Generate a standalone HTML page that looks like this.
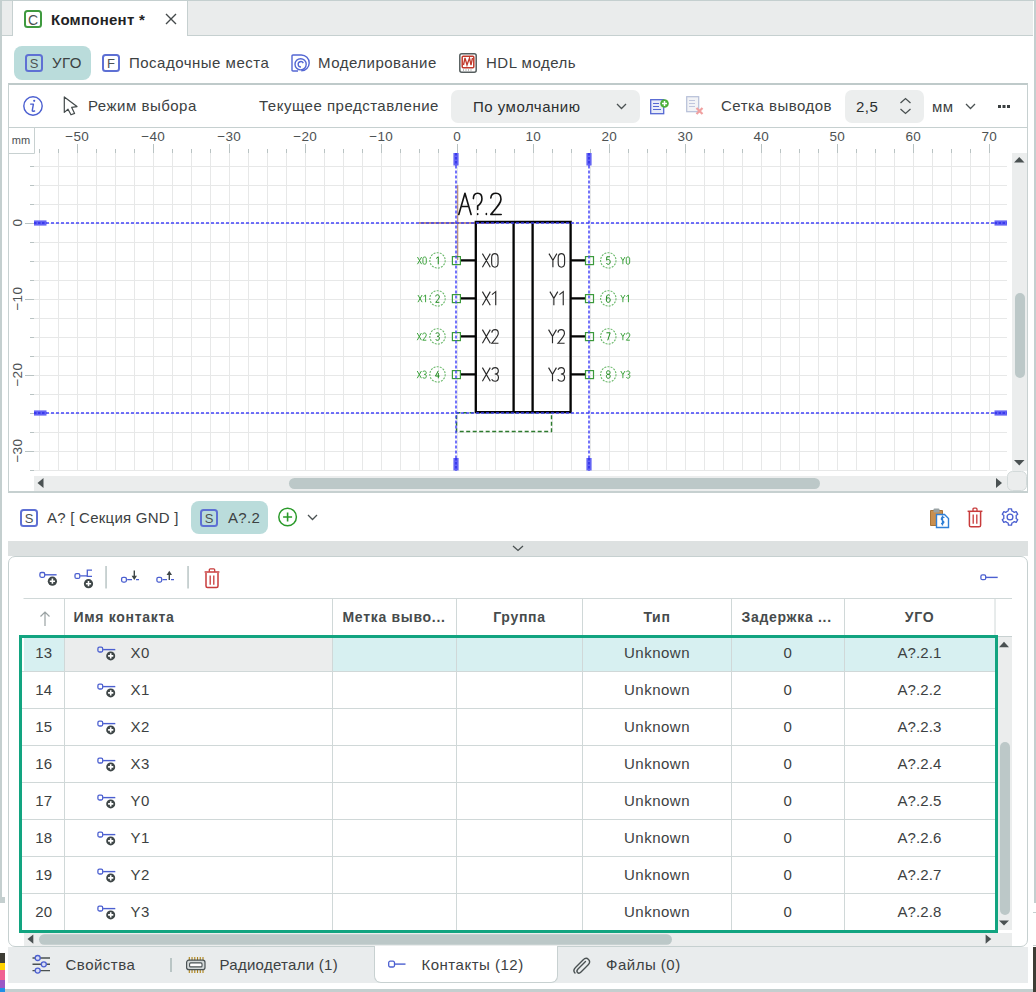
<!DOCTYPE html>
<html><head><meta charset="utf-8">
<style>
*{box-sizing:border-box;margin:0;padding:0}
html,body{width:1036px;height:992px;overflow:hidden;background:#fff;position:relative;font-family:"Liberation Sans",sans-serif;color:#3a3f40}
.a{position:absolute}
.t{position:absolute;font-size:15px;line-height:17px;white-space:nowrap;letter-spacing:0.5px;color:#3c4142}
.ic{position:absolute;border:2px solid #5e70d4;border-radius:3.5px;font-size:13px;line-height:14px;padding-top:0.5px;text-align:center;color:#4d5253;letter-spacing:0}
svg{position:absolute;overflow:visible}
</style></head><body>

<!-- page edges -->
<div class="a" style="left:0;top:0;width:1036px;height:1px;background:#c4cfcf"></div>
<div class="a" style="left:0;top:0;width:2px;height:903px;background:#c4cfcf"></div>
<div class="a" style="left:0;top:897px;width:5px;height:6px;background:#c4cfcf"></div>
<div class="a" style="left:1034px;top:0;width:2px;height:903px;background:#c4cfcf"></div>

<!-- top tab bar -->
<div class="a" style="left:2px;top:1px;width:1031px;height:35px;background:#eaecec;border-bottom:1px solid #c6d0d0"></div>
<div class="a" style="left:12px;top:1px;width:176px;height:35px;background:#fff;border-left:1px solid #c6d0d0;border-right:1px solid #c6d0d0"></div>
<div class="ic" style="left:24px;top:10px;width:18px;height:18px;border-color:#3f9a3f;font-size:14px;line-height:14px">C</div>
<div class="t" style="left:51px;top:11px;font-weight:bold;color:#1f2324;letter-spacing:0.25px">Компонент *</div>
<svg style="left:165px;top:13px" width="12" height="12"><path d="M1 1L11 11M11 1L1 11" stroke="#444a4b" stroke-width="1.4"/></svg>

<!-- sub tabs -->
<div class="a" style="left:14px;top:45.6px;width:76.6px;height:34.2px;background:#badcdb;border-radius:8px"></div>
<div class="ic" style="left:25px;top:54px;width:18px;height:18px">S</div>
<div class="t" style="left:52px;top:54px">УГО</div>
<div class="ic" style="left:102px;top:54px;width:18px;height:18px">F</div>
<div class="t" style="left:129px;top:54px">Посадочные места</div>
<svg style="left:291px;top:54px" width="19" height="18"><path d="M7 17H2Q1 17 1 16V2Q1 1 2 1H10.3A7.9 7.9 0 0 1 10.3 16.8" fill="none" stroke="#5467d3" stroke-width="1.4"/><circle cx="9.6" cy="10.3" r="5.6" fill="none" stroke="#5467d3" stroke-width="1.4"/><path d="M12.3 9.1A2.7 2.7 0 1 0 10 13" fill="none" stroke="#5467d3" stroke-width="1.4"/></svg>
<div class="t" style="left:318px;top:54px">Моделирование</div>
<svg style="left:459px;top:53px" width="18" height="20"><rect x="0.8" y="0.8" width="16.4" height="18.4" rx="2" fill="#fff" stroke="#555d5e" stroke-width="1.5"/><rect x="3.2" y="3.2" width="11.6" height="11.6" rx="1" fill="#fff" stroke="#c0392b" stroke-width="1.5"/><path d="M4.5 12L6 5L8 12L10.5 5L12 12L13.5 5" fill="none" stroke="#c0392b" stroke-width="1.3"/><path d="M4 17H14" stroke="#555" stroke-width="0.8" stroke-dasharray="1 1.5"/></svg>
<div class="t" style="left:486px;top:54px">HDL модель</div>

<!-- toolbar -->
<div class="a" style="left:8px;top:83px;width:1019.5px;height:45px;border:1px solid #c6d0d0;border-top:2px solid #bfcaca;border-bottom:none"></div>


<svg style="left:23px;top:96px" width="20" height="20"><circle cx="10" cy="10" r="9.2" fill="none" stroke="#4b5fd0" stroke-width="1.4"/><path d="M7.6 8.1H10.4L9.3 14.3Q9.1 15.3 10.1 15.2L11.6 15" fill="none" stroke="#4b5fd0" stroke-width="1.4" stroke-linecap="round" stroke-linejoin="round"/><circle cx="11.2" cy="4.8" r="1.1" fill="#4b5fd0"/></svg>
<svg style="left:63px;top:96px" width="16" height="21"><path d="M1.3 0.9V16.4L5 13.2L8 18.8L11.6 17.4L8.7 11.4L14 10.6Z" fill="#fff" stroke="#434a4b" stroke-width="1.2" stroke-linejoin="round"/></svg>
<div class="t" style="left:88px;top:97px">Режим выбора</div>
<div class="t" style="left:259px;top:97px">Текущее представление</div>
<div class="a" style="left:451px;top:90px;width:189px;height:32.5px;background:#eceeee;border-radius:7px"></div>
<div class="t" style="left:473px;top:98px;color:#2b2f30">По умолчанию</div>
<svg style="left:616px;top:103px" width="11" height="7"><path d="M1 1L5.5 5.5L10 1" fill="none" stroke="#4a5152" stroke-width="1.3"/></svg>
<svg style="left:650px;top:97px" width="20" height="18"><rect x="0.7" y="2.7" width="13" height="14" fill="#e8ecf8" stroke="#5467d3" stroke-width="1.3"/><path d="M3 6.5H9M3 9.5H9M3 12.5H11" stroke="#5467d3" stroke-width="1.2"/><circle cx="14.5" cy="6.5" r="4.3" fill="#4caf3a"/><path d="M14.5 4V9M12 6.5H17" stroke="#fff" stroke-width="1.5"/></svg>
<svg style="left:686px;top:96px" width="18" height="19"><rect x="0.7" y="0.7" width="12" height="15" fill="#f2f3f6" stroke="#b6bfd8" stroke-width="1.2"/><path d="M3 4.5H9M3 7.5H9M3 10.5H9" stroke="#c0c6de" stroke-width="1.1"/><path d="M10.5 12L16.5 18M16.5 12L10.5 18" stroke="#f0a0a0" stroke-width="2.2"/></svg>
<div class="t" style="left:721px;top:97px">Сетка выводов</div>
<div class="a" style="left:845px;top:90px;width:79px;height:32.5px;background:#eceeee;border-radius:7px"></div>
<div class="t" style="left:856px;top:98px;color:#2b2f30">2,5</div>
<svg style="left:899px;top:97px" width="13" height="18"><path d="M1.5 6L6.5 1.5L11.5 6M1.5 12L6.5 16.5L11.5 12" fill="none" stroke="#4a5152" stroke-width="1.3"/></svg>
<div class="t" style="left:932px;top:98px">мм</div>
<svg style="left:965px;top:103px" width="11" height="7"><path d="M1 1L5.5 5.5L10 1" fill="none" stroke="#4a5152" stroke-width="1.3"/></svg>
<svg style="left:998px;top:105px" width="13" height="4"><rect x="0" y="0" width="3" height="3" fill="#3a3f40"/><rect x="4.5" y="0" width="3" height="3" fill="#3a3f40"/><rect x="9" y="0" width="3" height="3" fill="#3a3f40"/></svg>
<!--CANVAS--><svg style="left:0;top:0" width="1036" height="992" viewBox="0 0 1036 992"><rect x="8" y="127" width="1" height="366" fill="#c8d1d1"/><rect x="1027" y="127" width="1" height="366" fill="#c8d1d1"/><rect x="8" y="491" width="1020" height="2" fill="#c6d0d0"/><rect x="8" y="127" width="1020" height="1" fill="#c6d0d0"/><path d="M39.5,153V470.5 M58.5,153V470.5 M77.5,153V470.5 M96.5,153V470.5 M115.5,153V470.5 M134.5,153V470.5 M153.5,153V470.5 M172.5,153V470.5 M191.5,153V470.5 M210.5,153V470.5 M229.5,153V470.5 M248.5,153V470.5 M267.5,153V470.5 M286.5,153V470.5 M305.5,153V470.5 M324.5,153V470.5 M343.5,153V470.5 M362.5,153V470.5 M381.5,153V470.5 M400.5,153V470.5 M419.5,153V470.5 M438.5,153V470.5 M457.5,153V470.5 M476.5,153V470.5 M495.5,153V470.5 M514.5,153V470.5 M533.5,153V470.5 M552.5,153V470.5 M571.5,153V470.5 M590.5,153V470.5 M609.5,153V470.5 M628.5,153V470.5 M647.5,153V470.5 M666.5,153V470.5 M685.5,153V470.5 M704.5,153V470.5 M723.5,153V470.5 M742.5,153V470.5 M761.5,153V470.5 M780.5,153V470.5 M799.5,153V470.5 M818.5,153V470.5 M837.5,153V470.5 M856.5,153V470.5 M875.5,153V470.5 M894.5,153V470.5 M913.5,153V470.5 M932.5,153V470.5 M951.5,153V470.5 M970.5,153V470.5 M989.5,153V470.5 M34,166.5H1007 M34,185.5H1007 M34,204.5H1007 M34,223.5H1007 M34,242.5H1007 M34,261.5H1007 M34,280.5H1007 M34,299.5H1007 M34,318.5H1007 M34,337.5H1007 M34,356.5H1007 M34,375.5H1007 M34,394.5H1007 M34,413.5H1007 M34,432.5H1007 M34,451.5H1007 M34,470.5H1007" stroke="#e7e8e8" stroke-width="1" fill="none"/><path d="M39.5,149V153 M58.5,149V153 M77.5,144V153 M96.5,149V153 M115.5,149V153 M134.5,149V153 M153.5,144V153 M172.5,149V153 M191.5,149V153 M210.5,149V153 M229.5,144V153 M248.5,149V153 M267.5,149V153 M286.5,149V153 M305.5,144V153 M324.5,149V153 M343.5,149V153 M362.5,149V153 M381.5,144V153 M400.5,149V153 M419.5,149V153 M438.5,149V153 M457.5,144V153 M476.5,149V153 M495.5,149V153 M514.5,149V153 M533.5,144V153 M552.5,149V153 M571.5,149V153 M590.5,149V153 M609.5,144V153 M628.5,149V153 M647.5,149V153 M666.5,149V153 M685.5,144V153 M704.5,149V153 M723.5,149V153 M742.5,149V153 M761.5,144V153 M780.5,149V153 M799.5,149V153 M818.5,149V153 M837.5,144V153 M856.5,149V153 M875.5,149V153 M894.5,149V153 M913.5,144V153 M932.5,149V153 M951.5,149V153 M970.5,149V153 M989.5,144V153 M30,166.5H34 M30,185.5H34 M30,204.5H34 M25,223.5H34 M30,242.5H34 M30,261.5H34 M30,280.5H34 M25,299.5H34 M30,318.5H34 M30,337.5H34 M30,356.5H34 M25,375.5H34 M30,394.5H34 M30,413.5H34 M30,432.5H34 M25,451.5H34 M30,470.5H34" stroke="#b9c3c3" stroke-width="1" fill="none"/><path d="M34.5,127V153.5H9" stroke="#c8d1d1" stroke-width="1" fill="none"/><text x="21" y="143.5" font-size="11" text-anchor="middle" fill="#4a4f50" font-family="Liberation Sans" letter-spacing="0.2">mm</text><text x="77.2" y="141" font-size="13.5" text-anchor="middle" fill="#4d5253" font-family="Liberation Sans" letter-spacing="0.3">−50</text><text x="153.2" y="141" font-size="13.5" text-anchor="middle" fill="#4d5253" font-family="Liberation Sans" letter-spacing="0.3">−40</text><text x="229.2" y="141" font-size="13.5" text-anchor="middle" fill="#4d5253" font-family="Liberation Sans" letter-spacing="0.3">−30</text><text x="305.2" y="141" font-size="13.5" text-anchor="middle" fill="#4d5253" font-family="Liberation Sans" letter-spacing="0.3">−20</text><text x="381.2" y="141" font-size="13.5" text-anchor="middle" fill="#4d5253" font-family="Liberation Sans" letter-spacing="0.3">−10</text><text x="457.2" y="141" font-size="13.5" text-anchor="middle" fill="#4d5253" font-family="Liberation Sans" letter-spacing="0.3">0</text><text x="533.2" y="141" font-size="13.5" text-anchor="middle" fill="#4d5253" font-family="Liberation Sans" letter-spacing="0.3">10</text><text x="609.2" y="141" font-size="13.5" text-anchor="middle" fill="#4d5253" font-family="Liberation Sans" letter-spacing="0.3">20</text><text x="685.2" y="141" font-size="13.5" text-anchor="middle" fill="#4d5253" font-family="Liberation Sans" letter-spacing="0.3">30</text><text x="761.2" y="141" font-size="13.5" text-anchor="middle" fill="#4d5253" font-family="Liberation Sans" letter-spacing="0.3">40</text><text x="837.2" y="141" font-size="13.5" text-anchor="middle" fill="#4d5253" font-family="Liberation Sans" letter-spacing="0.3">50</text><text x="913.2" y="141" font-size="13.5" text-anchor="middle" fill="#4d5253" font-family="Liberation Sans" letter-spacing="0.3">60</text><text x="989.2" y="141" font-size="13.5" text-anchor="middle" fill="#4d5253" font-family="Liberation Sans" letter-spacing="0.3">70</text><text x="0" y="0" transform="translate(22,222.7) rotate(-90)" font-size="13.5" text-anchor="middle" fill="#4d5253" font-family="Liberation Sans" letter-spacing="0.3">0</text><text x="0" y="0" transform="translate(22,298.7) rotate(-90)" font-size="13.5" text-anchor="middle" fill="#4d5253" font-family="Liberation Sans" letter-spacing="0.3">−10</text><text x="0" y="0" transform="translate(22,374.7) rotate(-90)" font-size="13.5" text-anchor="middle" fill="#4d5253" font-family="Liberation Sans" letter-spacing="0.3">−20</text><text x="0" y="0" transform="translate(22,450.7) rotate(-90)" font-size="13.5" text-anchor="middle" fill="#4d5253" font-family="Liberation Sans" letter-spacing="0.3">−30</text><rect x="1012" y="153" width="15" height="318" fill="#ebeded"/><path d="M1014,162.5H1024.5L1019.25,157Z" fill="#4a5152"/><path d="M1014,460H1024.5L1019.25,465.5Z" fill="#4a5152"/><rect x="1015" y="293" width="10" height="85" rx="5" fill="#bcc8c8"/><rect x="34" y="476" width="977" height="15" fill="#ebeded"/><path d="M43.5,478V488L37.5,483Z" fill="#4a5152"/><path d="M996,478V488L1002,483Z" fill="#4a5152"/><rect x="289" y="478" width="531" height="11" rx="5.5" fill="#bcc8c8"/><rect x="1007.5" y="471.5" width="19" height="19" rx="5" fill="#ebeded" stroke="#d3dada" stroke-width="1"/><path d="M457.6,185V260" stroke="#b89484" stroke-width="1.4" fill="none"/><path d="M419,223H495" stroke="#b89484" stroke-width="2" fill="none"/><rect x="456.5" y="412.8" width="95" height="18.7" fill="none" stroke="#2d7a2d" stroke-width="1.4" stroke-dasharray="4 2.5"/><path d="M475.8,222H570.6V412.2H475.8Z M513.6,222V412.2 M532.6,222V412.2" stroke="#050505" stroke-width="2.3" fill="none"/><path d="M460.3,260.3H475.6 M570.6,260.3H585.3 M460.3,298.3H475.6 M570.6,298.3H585.3 M460.3,336.3H475.6 M570.6,336.3H585.3 M460.3,374.3H475.6 M570.6,374.3H585.3" stroke="#050505" stroke-width="2.3" fill="none"/><rect x="452.4" y="256.6" width="8" height="8" fill="none" stroke="#3c9a3c" stroke-width="1.2"/><rect x="585.5" y="256.6" width="8" height="8" fill="none" stroke="#3c9a3c" stroke-width="1.2"/><circle cx="437.5" cy="260.40000000000003" r="7.7" fill="none" stroke="#6ab86a" stroke-width="1.1" stroke-dasharray="2 1.2"/><path d="M 436.15,258.45 L 438.25,256.80 L 438.25,264.30" stroke="#1e8a1e" stroke-width="1" fill="none"/><circle cx="608.3" cy="260.40000000000003" r="7.7" fill="none" stroke="#6ab86a" stroke-width="1.1" stroke-dasharray="2 1.2"/><path d="M 609.99,256.80 L 606.80,256.80 L 606.61,260.18 C 607.17,259.65 607.74,259.50 608.30,259.50 C 609.61,259.50 610.17,260.40 610.17,261.90 C 610.17,263.55 609.42,264.30 608.30,264.30 C 607.36,264.30 606.80,263.93 606.42,263.18" stroke="#1e8a1e" stroke-width="1" fill="none"/><path d="M 417.44,257.00 L 421.62,264.20 M 421.62,257.00 L 417.44,264.20 M 424.61,257.00 C 425.89,257.00 426.30,257.72 426.30,259.16 L 426.30,262.04 C 426.30,263.48 425.89,264.20 424.61,264.20 C 423.32,264.20 422.92,263.48 422.92,262.04 L 422.92,259.16 C 422.92,257.72 423.32,257.00 424.61,257.00 Z" stroke="#2a9a2a" stroke-width="0.9" fill="none"/><path d="M 620.80,257.00 L 622.89,260.60 L 624.98,257.00 M 622.89,260.60 L 622.89,264.20 M 627.96,257.00 C 629.25,257.00 629.66,257.72 629.66,259.16 L 629.66,262.04 C 629.66,263.48 629.25,264.20 627.96,264.20 C 626.68,264.20 626.27,263.48 626.27,262.04 L 626.27,259.16 C 626.27,257.72 626.68,257.00 627.96,257.00 Z" stroke="#2a9a2a" stroke-width="0.9" fill="none"/><path d="M 482.40,253.60 L 490.29,267.20 M 490.29,253.60 L 482.40,267.20 M 494.84,253.60 C 497.27,253.60 498.04,254.96 498.04,257.68 L 498.04,263.12 C 498.04,265.84 497.27,267.20 494.84,267.20 C 492.42,267.20 491.65,265.84 491.65,263.12 L 491.65,257.68 C 491.65,254.96 492.42,253.60 494.84,253.60 Z" stroke="#2a2a2a" stroke-width="1.15" fill="none"/><path d="M 548.96,253.60 L 552.90,260.40 L 556.85,253.60 M 552.90,260.40 L 552.90,267.20 M 561.40,253.60 C 563.83,253.60 564.60,254.96 564.60,257.68 L 564.60,263.12 C 564.60,265.84 563.83,267.20 561.40,267.20 C 558.98,267.20 558.21,265.84 558.21,263.12 L 558.21,257.68 C 558.21,254.96 558.98,253.60 561.40,253.60 Z" stroke="#2a2a2a" stroke-width="1.15" fill="none"/><rect x="452.4" y="294.6" width="8" height="8" fill="none" stroke="#3c9a3c" stroke-width="1.2"/><rect x="585.5" y="294.6" width="8" height="8" fill="none" stroke="#3c9a3c" stroke-width="1.2"/><circle cx="437.5" cy="298.40000000000003" r="7.7" fill="none" stroke="#6ab86a" stroke-width="1.1" stroke-dasharray="2 1.2"/><path d="M 435.70,296.45 C 435.81,295.18 436.56,294.80 437.50,294.80 C 438.62,294.80 439.30,295.55 439.30,296.90 C 439.30,298.18 438.25,299.30 435.70,302.30 L 439.38,302.30" stroke="#1e8a1e" stroke-width="1" fill="none"/><circle cx="608.3" cy="298.40000000000003" r="7.7" fill="none" stroke="#6ab86a" stroke-width="1.1" stroke-dasharray="2 1.2"/><path d="M 609.80,295.40 C 609.42,294.95 608.86,294.80 608.30,294.80 C 606.99,294.80 606.42,296.30 606.42,298.55 L 606.42,300.05 C 606.42,301.55 606.99,302.30 608.30,302.30 C 609.61,302.30 610.17,301.55 610.17,300.05 C 610.17,298.55 609.61,297.80 608.30,297.80 C 607.17,297.80 606.61,298.40 606.42,299.30" stroke="#1e8a1e" stroke-width="1" fill="none"/><path d="M 417.95,295.00 L 422.12,302.20 M 422.12,295.00 L 417.95,302.20 M 423.56,296.58 L 425.58,295.00 L 425.58,302.20" stroke="#2a9a2a" stroke-width="0.9" fill="none"/><path d="M 620.80,295.00 L 622.89,298.60 L 624.98,295.00 M 622.89,298.60 L 622.89,302.20 M 626.42,296.58 L 628.43,295.00 L 628.43,302.20" stroke="#2a9a2a" stroke-width="0.9" fill="none"/><path d="M 482.40,291.60 L 490.29,305.20 M 490.29,291.60 L 482.40,305.20 M 491.92,294.59 L 495.73,291.60 L 495.73,305.20" stroke="#2a2a2a" stroke-width="1.15" fill="none"/><path d="M 549.91,291.60 L 553.86,298.40 L 557.80,291.60 M 553.86,298.40 L 553.86,305.20 M 559.43,294.59 L 563.24,291.60 L 563.24,305.20" stroke="#2a2a2a" stroke-width="1.15" fill="none"/><rect x="452.4" y="332.6" width="8" height="8" fill="none" stroke="#3c9a3c" stroke-width="1.2"/><rect x="585.5" y="332.6" width="8" height="8" fill="none" stroke="#3c9a3c" stroke-width="1.2"/><circle cx="437.5" cy="336.40000000000003" r="7.7" fill="none" stroke="#6ab86a" stroke-width="1.1" stroke-dasharray="2 1.2"/><path d="M 435.70,333.93 C 436.19,332.95 436.75,332.80 437.50,332.80 C 438.62,332.80 439.30,333.55 439.30,334.68 C 439.30,335.80 438.62,336.32 437.31,336.32 C 438.62,336.32 439.38,336.93 439.38,338.28 C 439.38,339.70 438.62,340.30 437.50,340.30 C 436.75,340.30 436.07,340.07 435.62,339.18" stroke="#1e8a1e" stroke-width="1" fill="none"/><circle cx="608.3" cy="336.40000000000003" r="7.7" fill="none" stroke="#6ab86a" stroke-width="1.1" stroke-dasharray="2 1.2"/><path d="M 606.42,332.80 L 610.17,332.80 L 607.74,340.30" stroke="#1e8a1e" stroke-width="1" fill="none"/><path d="M 417.23,333.00 L 421.40,340.20 M 421.40,333.00 L 417.23,340.20 M 422.77,334.58 C 422.88,333.36 423.60,333.00 424.50,333.00 C 425.58,333.00 426.23,333.72 426.23,335.02 C 426.23,336.24 425.22,337.32 422.77,340.20 L 426.30,340.20" stroke="#2a9a2a" stroke-width="0.9" fill="none"/><path d="M 620.80,333.00 L 622.89,336.60 L 624.98,333.00 M 622.89,336.60 L 622.89,340.20 M 626.34,334.58 C 626.45,333.36 627.17,333.00 628.07,333.00 C 629.15,333.00 629.80,333.72 629.80,335.02 C 629.80,336.24 628.79,337.32 626.34,340.20 L 629.87,340.20" stroke="#2a9a2a" stroke-width="0.9" fill="none"/><path d="M 482.40,329.60 L 490.29,343.20 M 490.29,329.60 L 482.40,343.20 M 491.78,332.59 C 491.99,330.28 493.35,329.60 495.05,329.60 C 497.09,329.60 498.31,330.96 498.31,333.41 C 498.31,335.72 496.41,337.76 491.78,343.20 L 498.45,343.20" stroke="#2a2a2a" stroke-width="1.15" fill="none"/><path d="M 548.55,329.60 L 552.50,336.40 L 556.44,329.60 M 552.50,336.40 L 552.50,343.20 M 557.94,332.59 C 558.14,330.28 559.50,329.60 561.20,329.60 C 563.24,329.60 564.46,330.96 564.46,333.41 C 564.46,335.72 562.56,337.76 557.94,343.20 L 564.60,343.20" stroke="#2a2a2a" stroke-width="1.15" fill="none"/><rect x="452.4" y="370.6" width="8" height="8" fill="none" stroke="#3c9a3c" stroke-width="1.2"/><rect x="585.5" y="370.6" width="8" height="8" fill="none" stroke="#3c9a3c" stroke-width="1.2"/><circle cx="437.5" cy="374.40000000000003" r="7.7" fill="none" stroke="#6ab86a" stroke-width="1.1" stroke-dasharray="2 1.2"/><path d="M 438.32,370.80 L 435.44,376.05 L 439.56,376.05 M 438.32,373.05 L 438.32,378.30" stroke="#1e8a1e" stroke-width="1" fill="none"/><circle cx="608.3" cy="374.40000000000003" r="7.7" fill="none" stroke="#6ab86a" stroke-width="1.1" stroke-dasharray="2 1.2"/><path d="M 608.30,374.32 C 606.99,374.32 606.54,373.65 606.54,372.53 C 606.54,371.32 607.17,370.80 608.30,370.80 C 609.42,370.80 610.06,371.32 610.06,372.53 C 610.06,373.65 609.61,374.32 608.30,374.32 C 606.99,374.32 606.42,375.07 606.42,376.28 C 606.42,377.55 607.17,378.30 608.30,378.30 C 609.42,378.30 610.17,377.55 610.17,376.28 C 610.17,375.07 609.61,374.32 608.30,374.32 Z" stroke="#1e8a1e" stroke-width="1" fill="none"/><path d="M 417.23,371.00 L 421.40,378.20 M 421.40,371.00 L 417.23,378.20 M 422.77,372.08 C 423.24,371.14 423.78,371.00 424.50,371.00 C 425.58,371.00 426.23,371.72 426.23,372.80 C 426.23,373.88 425.58,374.38 424.32,374.38 C 425.58,374.38 426.30,374.96 426.30,376.26 C 426.30,377.62 425.58,378.20 424.50,378.20 C 423.78,378.20 423.13,377.98 422.70,377.12" stroke="#2a9a2a" stroke-width="0.9" fill="none"/><path d="M 620.80,371.00 L 622.89,374.60 L 624.98,371.00 M 622.89,374.60 L 622.89,378.20 M 626.34,372.08 C 626.81,371.14 627.35,371.00 628.07,371.00 C 629.15,371.00 629.80,371.72 629.80,372.80 C 629.80,373.88 629.15,374.38 627.89,374.38 C 629.15,374.38 629.87,374.96 629.87,376.26 C 629.87,377.62 629.15,378.20 628.07,378.20 C 627.35,378.20 626.70,377.98 626.27,377.12" stroke="#2a9a2a" stroke-width="0.9" fill="none"/><path d="M 482.40,367.60 L 490.29,381.20 M 490.29,367.60 L 482.40,381.20 M 491.78,369.64 C 492.67,367.87 493.69,367.60 495.05,367.60 C 497.09,367.60 498.31,368.96 498.31,371.00 C 498.31,373.04 497.09,373.99 494.71,373.99 C 497.09,373.99 498.45,375.08 498.45,377.53 C 498.45,380.11 497.09,381.20 495.05,381.20 C 493.69,381.20 492.46,380.79 491.65,379.16" stroke="#2a2a2a" stroke-width="1.15" fill="none"/><path d="M 548.55,367.60 L 552.50,374.40 L 556.44,367.60 M 552.50,374.40 L 552.50,381.20 M 557.94,369.64 C 558.82,367.87 559.84,367.60 561.20,367.60 C 563.24,367.60 564.46,368.96 564.46,371.00 C 564.46,373.04 563.24,373.99 560.86,373.99 C 563.24,373.99 564.60,375.08 564.60,377.53 C 564.60,380.11 563.24,381.20 561.20,381.20 C 559.84,381.20 558.62,380.79 557.80,379.16" stroke="#2a2a2a" stroke-width="1.15" fill="none"/><path d="M 458.80,214.50 L 464.95,193.30 L 471.10,214.50 M 461.26,206.44 L 468.64,206.44 M 473.39,198.60 C 473.39,194.36 475.00,193.30 477.67,193.30 C 480.78,193.30 481.94,195.42 481.94,198.81 C 481.94,202.20 480.78,203.90 477.67,206.02 L 477.67,209.41 M 477.67,213.86 L 477.67,214.50 M 486.36,213.44 L 486.36,214.50 M 490.81,197.96 C 491.13,194.36 493.25,193.30 495.90,193.30 C 499.08,193.30 500.99,195.42 500.99,199.24 C 500.99,202.84 498.02,206.02 490.81,214.50 L 501.20,214.50" stroke="#111" stroke-width="1.6" fill="none" stroke-linejoin="round" stroke-linecap="round"/><path d="M46,223H994" stroke="rgba(60,60,250,0.72)" stroke-width="2" stroke-dasharray="3 2"/><path d="M46,413H994" stroke="rgba(60,60,250,0.72)" stroke-width="2" stroke-dasharray="3 2"/><path d="M456,165.5V458" stroke="rgba(60,60,250,0.72)" stroke-width="2" stroke-dasharray="3 2"/><path d="M589,165.5V458" stroke="rgba(60,60,250,0.72)" stroke-width="2" stroke-dasharray="3 2"/><rect x="453.4" y="153" width="5.2" height="12.5" fill="#6464f4"/><rect x="453.4" y="458" width="5.2" height="12.5" fill="#6464f4"/><rect x="586.4" y="153" width="5.2" height="12.5" fill="#6464f4"/><rect x="586.4" y="458" width="5.2" height="12.5" fill="#6464f4"/><rect x="34" y="220.4" width="12.5" height="5.2" fill="#6464f4"/><rect x="994.5" y="220.4" width="12.5" height="5.2" fill="#6464f4"/><rect x="34" y="410.4" width="12.5" height="5.2" fill="#6464f4"/><rect x="994.5" y="410.4" width="12.5" height="5.2" fill="#6464f4"/><path d="M456,153V165.5M456,458V470.5" stroke="#3a3aee" stroke-width="2" stroke-dasharray="2.5 1.5"/><path d="M589,153V165.5M589,458V470.5" stroke="#3a3aee" stroke-width="2" stroke-dasharray="2.5 1.5"/><path d="M34,223H46.5M994.5,223H1007" stroke="#3a3aee" stroke-width="2" stroke-dasharray="2.5 1.5"/><path d="M34,413H46.5M994.5,413H1007" stroke="#3a3aee" stroke-width="2" stroke-dasharray="2.5 1.5"/></svg><!--/CANVAS-->

<!-- section tabs -->
<div class="ic" style="left:20px;top:509px;width:18px;height:18px">S</div>
<div class="t" style="left:47px;top:508.5px;letter-spacing:0.25px">A? [ Секция GND ]</div>
<div class="a" style="left:191px;top:501px;width:77px;height:33px;background:#badcdb;border-radius:8px"></div>
<div class="ic" style="left:200px;top:509px;width:18px;height:18px">S</div>
<div class="t" style="left:228px;top:508.5px;letter-spacing:0.3px">A?.2</div>
<svg style="left:278px;top:507px" width="20" height="20"><circle cx="9.6" cy="10" r="8.8" fill="none" stroke="#2a9a2a" stroke-width="1.5"/><path d="M9.6 5.5V14.5M5.1 10H14.1" stroke="#2a9a2a" stroke-width="1.6"/></svg>
<svg style="left:307px;top:514px" width="11" height="7"><path d="M1 1L5.5 5.5L10 1" fill="none" stroke="#4a5152" stroke-width="1.3"/></svg>
<svg style="left:929px;top:507px" width="22" height="22"><path d="M1.5 3.5H13.5V18.5H1.5Z" fill="#c98f4f" stroke="#a8743a" stroke-width="1"/><rect x="4.5" y="1.5" width="6" height="4" rx="1" fill="#9aa3a5"/><path d="M7.5 7.5H15.5L19.5 11.5V20.5H7.5Z" fill="#fff" stroke="#2f7fd6" stroke-width="1.4"/><path d="M15.5 10.5C12 9.5 11.5 12.5 13.5 13.5C15.5 14.5 15.5 17 12 16.5M13.5 8.5V18.5" fill="none" stroke="#2f7fd6" stroke-width="1.3"/></svg>
<svg style="left:967px;top:507px" width="16" height="21"><path d="M0.6 4.3H15.4" stroke="#c83b3b" stroke-width="1.5"/><path d="M6 4V2.3Q6 1.2 7 1.2H9Q10 1.2 10 2.3V4" fill="none" stroke="#c83b3b" stroke-width="1.3"/><path d="M2.4 5V18.2Q2.4 19.8 4 19.8H12Q13.6 19.8 13.6 18.2V5" fill="none" stroke="#c83b3b" stroke-width="1.5"/><path d="M6.2 7.5V16.8M9.8 7.5V16.8" stroke="#c83b3b" stroke-width="1.3"/></svg>
<svg style="left:1001px;top:508px" width="19" height="19"><path d="M6.04,3.44 L7.16,2.98 L7.44,0.95 L10.56,0.95 L10.84,2.98 L12.34,3.66 L13.30,4.39 L15.19,3.62 L16.75,6.33 L15.14,7.58 L15.30,9.22 L15.14,10.42 L16.75,11.67 L15.19,14.38 L13.30,13.61 L11.96,14.56 L10.84,15.02 L10.56,17.05 L7.44,17.05 L7.16,15.02 L5.66,14.34 L4.70,13.61 L2.81,14.38 L1.25,11.67 L2.86,10.42 L2.70,8.78 L2.86,7.58 L1.25,6.33 L2.81,3.62 L4.70,4.39Z" fill="none" stroke="#4b5fd0" stroke-width="1.3" stroke-linejoin="round"/><circle cx="9" cy="9" r="2.9" fill="none" stroke="#4b5fd0" stroke-width="1.3"/></svg>

<!-- collapse bar -->
<div class="a" style="left:8px;top:541px;width:1020px;height:15px;background:#dde1e1"></div>
<svg style="left:512px;top:545px" width="12" height="7"><path d="M1 1L6 5.5L11 1" fill="none" stroke="#4a5152" stroke-width="1.3"/></svg>

<!-- table panel -->
<div class="a" style="left:8px;top:556px;width:1020px;height:391px;border:1px solid #c6d0d0;border-radius:7px"></div>
<!--TABLE-->
<svg style="left:0;top:0" width="1036" height="992"><rect x="39.9" y="572.5" width="4.8" height="4.8" rx="1.5" fill="none" stroke="#4b5fd0" stroke-width="1.3"/><path d="M45,574.8H56.6" stroke="#4b5fd0" stroke-width="1.4"/><circle cx="52.4" cy="581.2" r="4.6" fill="#3e4647"/><path d="M49.8,581.2H55.0M52.4,578.6V583.8000000000001" stroke="#fff" stroke-width="1.6"/><rect x="75.0" y="573.6" width="4.8" height="4.8" rx="1.5" fill="none" stroke="#4b5fd0" stroke-width="1.3"/><path d="M80.2,575.9H87.3M92,570.2H87.3V576.4H92" stroke="#4b5fd0" stroke-width="1.3" fill="none"/><circle cx="88.5" cy="583.7" r="4.6" fill="#3e4647"/><path d="M85.9,583.7H91.1M88.5,581.1V586.3000000000001" stroke="#fff" stroke-width="1.6"/><rect x="105.3" y="566" width="1.5" height="22.5" fill="#b9c5c5"/><rect x="187.3" y="566" width="1.5" height="22.5" fill="#b9c5c5"/><rect x="121.6" y="577.3000000000001" width="4.8" height="4.8" rx="1.5" fill="none" stroke="#4b5fd0" stroke-width="1.3"/><path d="M127.2,579.7H132M136,579.7H139" stroke="#4b5fd0" stroke-width="1.2"/><path d="M134.3,570.5V578" stroke="#3e4647" stroke-width="1.4"/><path d="M131.6,575.8L134.3,580L137,575.8Z" fill="#3e4647"/><rect x="156.9" y="577.3000000000001" width="4.8" height="4.8" rx="1.5" fill="none" stroke="#4b5fd0" stroke-width="1.3"/><path d="M162.5,579.7H167M171,579.7H174" stroke="#4b5fd0" stroke-width="1.2"/><path d="M169.3,573.5V580" stroke="#3e4647" stroke-width="1.4"/><path d="M166.6,575L169.3,570.8L172,575Z" fill="#3e4647"/><path d="M204.6,572H219.4" stroke="#c83b3b" stroke-width="1.5"/><path d="M209.3,571.8V569.8Q209.3,568.8 210.3,568.8H213.7Q214.7,568.8 214.7,569.8V571.8" fill="none" stroke="#c83b3b" stroke-width="1.3"/><path d="M206,573V586Q206,587.5 207.5,587.5H216.5Q218,587.5 218,586V573" fill="none" stroke="#c83b3b" stroke-width="1.5"/><path d="M210.2,575.5V584.8M213.8,575.5V584.8" stroke="#c83b3b" stroke-width="1.3"/><rect x="980.9" y="574.9" width="4.8" height="4.8" rx="1.5" fill="none" stroke="#4b5fd0" stroke-width="1.3"/><path d="M986,577.4H997.7" stroke="#4b5fd0" stroke-width="1.4"/><path d="M23.5,598.5H1012" stroke="#d0d8d8" stroke-width="1"/><path d="M64.5,598.5V636 M332.5,598.5V636 M456.5,598.5V636 M582.5,598.5V636 M731.5,598.5V636 M844.5,598.5V636 M995,598.5V636" stroke="#d0d8d8" stroke-width="1"/><path d="M45,612V626M40.5,616.5L45,612L49.5,616.5" stroke="#9aa2a3" stroke-width="1.2" fill="none"/><rect x="24" y="638" width="40.5" height="33.5" fill="#d7f0f1"/><rect x="64.5" y="638" width="268" height="33.5" fill="#ebeded"/><rect x="332.5" y="638" width="662.5" height="33.5" fill="#d7f0f1"/><path d="M22,671.5H995 M22,708.5H995 M22,745.5H995 M22,782.5H995 M22,819.5H995 M22,856.5H995 M22,893.5H995" stroke="#d0d8d8" stroke-width="1"/><path d="M64.5,636V930 M332.5,636V930 M456.5,636V930 M582.5,636V930 M731.5,636V930 M844.5,636V930" stroke="#d0d8d8" stroke-width="1"/><rect x="97.89999999999999" y="647.2" width="4.8" height="4.8" rx="1.5" fill="none" stroke="#4b5fd0" stroke-width="1.3"/><path d="M103.1,649.6H115.3" stroke="#4b5fd0" stroke-width="1.4"/><circle cx="110.7" cy="655.9" r="4.5" fill="#3e4647"/><path d="M108.10000000000001,655.9H113.3M110.7,653.3V658.5" stroke="#fff" stroke-width="1.6"/><rect x="97.89999999999999" y="684.2" width="4.8" height="4.8" rx="1.5" fill="none" stroke="#4b5fd0" stroke-width="1.3"/><path d="M103.1,686.6H115.3" stroke="#4b5fd0" stroke-width="1.4"/><circle cx="110.7" cy="692.9" r="4.5" fill="#3e4647"/><path d="M108.10000000000001,692.9H113.3M110.7,690.3V695.5" stroke="#fff" stroke-width="1.6"/><rect x="97.89999999999999" y="721.2" width="4.8" height="4.8" rx="1.5" fill="none" stroke="#4b5fd0" stroke-width="1.3"/><path d="M103.1,723.6H115.3" stroke="#4b5fd0" stroke-width="1.4"/><circle cx="110.7" cy="729.9" r="4.5" fill="#3e4647"/><path d="M108.10000000000001,729.9H113.3M110.7,727.3V732.5" stroke="#fff" stroke-width="1.6"/><rect x="97.89999999999999" y="758.2" width="4.8" height="4.8" rx="1.5" fill="none" stroke="#4b5fd0" stroke-width="1.3"/><path d="M103.1,760.6H115.3" stroke="#4b5fd0" stroke-width="1.4"/><circle cx="110.7" cy="766.9" r="4.5" fill="#3e4647"/><path d="M108.10000000000001,766.9H113.3M110.7,764.3V769.5" stroke="#fff" stroke-width="1.6"/><rect x="97.89999999999999" y="795.2" width="4.8" height="4.8" rx="1.5" fill="none" stroke="#4b5fd0" stroke-width="1.3"/><path d="M103.1,797.6H115.3" stroke="#4b5fd0" stroke-width="1.4"/><circle cx="110.7" cy="803.9" r="4.5" fill="#3e4647"/><path d="M108.10000000000001,803.9H113.3M110.7,801.3V806.5" stroke="#fff" stroke-width="1.6"/><rect x="97.89999999999999" y="832.2" width="4.8" height="4.8" rx="1.5" fill="none" stroke="#4b5fd0" stroke-width="1.3"/><path d="M103.1,834.6H115.3" stroke="#4b5fd0" stroke-width="1.4"/><circle cx="110.7" cy="840.9" r="4.5" fill="#3e4647"/><path d="M108.10000000000001,840.9H113.3M110.7,838.3V843.5" stroke="#fff" stroke-width="1.6"/><rect x="97.89999999999999" y="869.2" width="4.8" height="4.8" rx="1.5" fill="none" stroke="#4b5fd0" stroke-width="1.3"/><path d="M103.1,871.6H115.3" stroke="#4b5fd0" stroke-width="1.4"/><circle cx="110.7" cy="877.9" r="4.5" fill="#3e4647"/><path d="M108.10000000000001,877.9H113.3M110.7,875.3V880.5" stroke="#fff" stroke-width="1.6"/><rect x="97.89999999999999" y="906.2" width="4.8" height="4.8" rx="1.5" fill="none" stroke="#4b5fd0" stroke-width="1.3"/><path d="M103.1,908.6H115.3" stroke="#4b5fd0" stroke-width="1.4"/><circle cx="110.7" cy="914.9" r="4.5" fill="#3e4647"/><path d="M108.10000000000001,914.9H113.3M110.7,912.3V917.5" stroke="#fff" stroke-width="1.6"/><rect x="20.5" y="636.5" width="976" height="295" fill="none" stroke="#12a480" stroke-width="3"/><rect x="998" y="636" width="14" height="294" fill="#ebeded"/><rect x="998" y="636" width="14" height="1" fill="#c8d1d1"/><path d="M999,647.2H1009L1004,641.8Z" fill="#4a5152"/><path d="M999,920.5H1009L1004,925.5Z" fill="#4a5152"/><rect x="1000" y="742" width="10" height="173" rx="5" fill="#bcc8c8"/><rect x="24" y="933" width="988" height="13" fill="#ebeded"/><path d="M33.3,934.4V943.7L27.5,939Z" fill="#4a5152"/><path d="M985.6,934.4V943.7L991.3,939Z" fill="#4a5152"/><rect x="39" y="934.3" width="633" height="10.4" rx="5.2" fill="#bcc8c8"/></svg>
<div class="t" style="left:73.5px;top:609.3px;font-size:14px;font-weight:bold;letter-spacing:0.7px;color:#464b4c;">Имя контакта</div>
<div class="t" style="left:342.5px;top:609.3px;font-size:14px;font-weight:bold;letter-spacing:0.7px;color:#464b4c;">Метка выво...</div>
<div class="t" style="left:456.5px;top:609.3px;width:126px;text-align:center;font-size:14px;font-weight:bold;letter-spacing:0.7px;color:#464b4c;">Группа</div>
<div class="t" style="left:582.5px;top:609.3px;width:149px;text-align:center;font-size:14px;font-weight:bold;letter-spacing:0.7px;color:#464b4c;">Тип</div>
<div class="t" style="left:741.5px;top:609.3px;font-size:14px;font-weight:bold;letter-spacing:0.7px;color:#464b4c;">Задержка ...</div>
<div class="t" style="left:844.5px;top:609.3px;width:150px;text-align:center;font-size:14px;font-weight:bold;letter-spacing:0.7px;color:#464b4c;">УГО</div>
<div class="t" style="left:22px;top:643.5px;width:43.5px;text-align:center;letter-spacing:0.2px">13</div>
<div class="t" style="left:130.4px;top:643.5px;">X0</div>
<div class="t" style="left:582.5px;top:643.5px;width:149px;text-align:center">Unknown</div>
<div class="t" style="left:731.5px;top:643.5px;width:113px;text-align:center">0</div>
<div class="t" style="left:844.5px;top:643.5px;width:150px;text-align:center;letter-spacing:0.1px">A?.2.1</div>
<div class="t" style="left:22px;top:680.5px;width:43.5px;text-align:center;letter-spacing:0.2px">14</div>
<div class="t" style="left:130.4px;top:680.5px;">X1</div>
<div class="t" style="left:582.5px;top:680.5px;width:149px;text-align:center">Unknown</div>
<div class="t" style="left:731.5px;top:680.5px;width:113px;text-align:center">0</div>
<div class="t" style="left:844.5px;top:680.5px;width:150px;text-align:center;letter-spacing:0.1px">A?.2.2</div>
<div class="t" style="left:22px;top:717.5px;width:43.5px;text-align:center;letter-spacing:0.2px">15</div>
<div class="t" style="left:130.4px;top:717.5px;">X2</div>
<div class="t" style="left:582.5px;top:717.5px;width:149px;text-align:center">Unknown</div>
<div class="t" style="left:731.5px;top:717.5px;width:113px;text-align:center">0</div>
<div class="t" style="left:844.5px;top:717.5px;width:150px;text-align:center;letter-spacing:0.1px">A?.2.3</div>
<div class="t" style="left:22px;top:754.5px;width:43.5px;text-align:center;letter-spacing:0.2px">16</div>
<div class="t" style="left:130.4px;top:754.5px;">X3</div>
<div class="t" style="left:582.5px;top:754.5px;width:149px;text-align:center">Unknown</div>
<div class="t" style="left:731.5px;top:754.5px;width:113px;text-align:center">0</div>
<div class="t" style="left:844.5px;top:754.5px;width:150px;text-align:center;letter-spacing:0.1px">A?.2.4</div>
<div class="t" style="left:22px;top:791.5px;width:43.5px;text-align:center;letter-spacing:0.2px">17</div>
<div class="t" style="left:130.4px;top:791.5px;">Y0</div>
<div class="t" style="left:582.5px;top:791.5px;width:149px;text-align:center">Unknown</div>
<div class="t" style="left:731.5px;top:791.5px;width:113px;text-align:center">0</div>
<div class="t" style="left:844.5px;top:791.5px;width:150px;text-align:center;letter-spacing:0.1px">A?.2.5</div>
<div class="t" style="left:22px;top:828.5px;width:43.5px;text-align:center;letter-spacing:0.2px">18</div>
<div class="t" style="left:130.4px;top:828.5px;">Y1</div>
<div class="t" style="left:582.5px;top:828.5px;width:149px;text-align:center">Unknown</div>
<div class="t" style="left:731.5px;top:828.5px;width:113px;text-align:center">0</div>
<div class="t" style="left:844.5px;top:828.5px;width:150px;text-align:center;letter-spacing:0.1px">A?.2.6</div>
<div class="t" style="left:22px;top:865.5px;width:43.5px;text-align:center;letter-spacing:0.2px">19</div>
<div class="t" style="left:130.4px;top:865.5px;">Y2</div>
<div class="t" style="left:582.5px;top:865.5px;width:149px;text-align:center">Unknown</div>
<div class="t" style="left:731.5px;top:865.5px;width:113px;text-align:center">0</div>
<div class="t" style="left:844.5px;top:865.5px;width:150px;text-align:center;letter-spacing:0.1px">A?.2.7</div>
<div class="t" style="left:22px;top:902.5px;width:43.5px;text-align:center;letter-spacing:0.2px">20</div>
<div class="t" style="left:130.4px;top:902.5px;">Y3</div>
<div class="t" style="left:582.5px;top:902.5px;width:149px;text-align:center">Unknown</div>
<div class="t" style="left:731.5px;top:902.5px;width:113px;text-align:center">0</div>
<div class="t" style="left:844.5px;top:902.5px;width:150px;text-align:center;letter-spacing:0.1px">A?.2.8</div>
<!--/TABLE-->
<!--BOTTOM-->
<div class="a" style="left:8px;top:947px;width:1020px;height:35.5px;background:#e9eced"></div>
<div class="a" style="left:374px;top:946px;width:184px;height:36.5px;background:#fff;border:1px solid #c8d1d1;border-top:none;border-radius:0 0 7px 7px"></div>
<div class="a" style="left:0;top:989px;width:1033px;height:3px;background:#c4cfcf"></div>
<div class="a" style="left:0;top:953px;width:5px;height:39px;background:linear-gradient(#3d3d35 0,#3d3d35 10px,#ffd200 10px,#ffd200 17px,#f06292 17px,#f06292 27px,#9b59c6 27px,#9b59c6 35px,#1e90e8 35px)"></div>
<div class="a" style="left:1033px;top:947px;width:3px;height:45px;background:#3d3d35"></div>
<div class="a" style="left:1033px;top:912px;width:3px;height:1px;background:#c4cfcf"></div>
<div class="a" style="left:1033px;top:945px;width:3px;height:1px;background:#c4cfcf"></div>
<svg style="left:32px;top:955px" width="19" height="19"><path d="M0.5 3H18M0.5 9.3H18M0.5 15.6H18" stroke="#4a5152" stroke-width="1.4"/><circle cx="5.7" cy="3" r="2.5" fill="#d8ddf5" stroke="#4b5fd0" stroke-width="1.3"/><circle cx="11.8" cy="9.3" r="2.5" fill="#d8ddf5" stroke="#4b5fd0" stroke-width="1.3"/><circle cx="5.7" cy="15.6" r="2.5" fill="#d8ddf5" stroke="#4b5fd0" stroke-width="1.3"/></svg>
<div class="t" style="left:65.5px;top:956px">Свойства</div>
<div class="a" style="left:170px;top:957.5px;width:1.5px;height:14px;background:#b9c5c5"></div>
<svg style="left:186px;top:956px" width="20" height="18"><path d="M3.30 1V4.5M3.30 13.5V17M6.04 1V4.5M6.04 13.5V17M8.78 1V4.5M8.78 13.5V17M11.52 1V4.5M11.52 13.5V17M14.26 1V4.5M14.26 13.5V17M17.00 1V4.5M17.00 13.5V17" stroke="#b08418" stroke-width="1.1"/><rect x="0.6" y="4.2" width="18.4" height="9.4" rx="2.2" fill="#d3d8d9" stroke="#4a5254" stroke-width="1.2"/><rect x="3.6" y="6.9" width="12.4" height="4" rx="1" fill="#fff" stroke="#4a5254" stroke-width="1.1"/></svg>
<div class="t" style="left:219.5px;top:956px;letter-spacing:0.28px">Радиодетали (1)</div>
<svg style="left:388px;top:960px" width="18" height="9"><rect x="0.7" y="1.2" width="5.8" height="5.8" rx="1.5" fill="none" stroke="#4b5fd0" stroke-width="1.3"/><path d="M6.5 4.1H17.5" stroke="#4b5fd0" stroke-width="1.4"/></svg>
<div class="t" style="left:421.5px;top:956px">Контакты (12)</div>
<svg style="left:572px;top:956px" width="18" height="19"><path d="M13.5 5.5L6 13Q4 15 5.5 16.5Q7 18 9 16L16 9Q19 6 16.5 3.5Q14 1 11 4L3.5 11.5Q0.5 14.5 3 17" fill="none" stroke="#4a5152" stroke-width="1.4" stroke-linecap="round"/></svg>
<div class="t" style="left:606px;top:956px">Файлы (0)</div>
<!--/BOTTOM-->
</body></html>
